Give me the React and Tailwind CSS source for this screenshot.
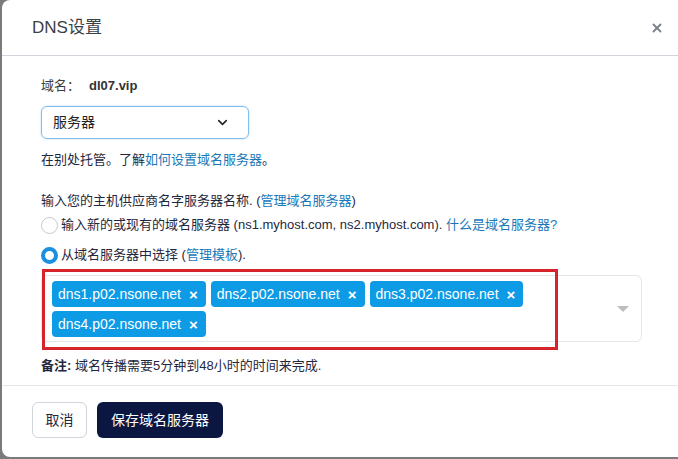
import React from "react";
import { X, ChevronDown } from "lucide-react";

const servers = [
  "dns1.p02.nsone.net",
  "dns2.p02.nsone.net",
  "dns3.p02.nsone.net",
  "dns4.p02.nsone.net",
];

function Tag({ label }) {
  return (
    <span className="inline-flex items-center h-[26px] pl-[6px] pr-[8px] rounded-[4px] bg-[#0d9be6] text-white text-[14px] leading-none">
      {label}
      <span className="ml-[8px] text-[15px] font-bold leading-none">×</span>
    </span>
  );
}

export default function App() {
  return (
    <div
      className="h-[459px] w-[678px] overflow-hidden bg-[#7b7b7b] pl-[2px] flex"
      style={{ fontFamily: '"Liberation Sans", "Noto Sans CJK SC", sans-serif' }}
    >
      <div className="w-[700px] h-[457px] shrink-0 bg-white rounded-lg flex flex-col">
        {/* Header */}
        <div className="h-[56px] pl-[30px] pr-[38px] flex items-center justify-between border-b border-gray-300 shrink-0">
          <h2 className="text-[17px] text-[#3b3f48]">DNS设置</h2>
          <X className="w-[14px] h-[14px] text-[#7d828b]" strokeWidth={3.2} />
        </div>

        {/* Body */}
        <div className="pl-[39px] pt-[20px] pb-[9px] text-[13px] text-[#1f2840] border-b border-gray-200">
          <div className="h-[20px] flex items-center">
            <span className="text-[#3d3d3d]">域名：</span>
            <span className="ml-[9px] font-bold text-[#333]">dl07.vip</span>
          </div>

          <div className="mt-[10px] w-[208px] h-[33px] border border-[#80bfe9] rounded-[6px] flex items-center justify-between pl-[11px] pr-[18px] shadow-[0_0_2px_rgba(96,170,230,0.5)]">
            <span className="text-[14px] text-[#222]">服务器</span>
            <ChevronDown className="w-[15px] h-[15px] text-[#222]" strokeWidth={2.5} />
          </div>

          <p className="mt-[11px] h-[20px] leading-[20px]">
            在别处托管。了解<span className="text-[#1a78b8]">如何设置域名服务器</span>。
          </p>

          <p className="mt-[21px] h-[20px] leading-[20px]">
            输入您的主机供应商名字服务器名称. (<span className="text-[#1a78b8]">管理域名服务器</span>)
          </p>

          <div className="mt-[4px] h-[20px] flex items-center">
            <span className="w-[17px] h-[17px] rounded-full border border-[#c4c7cc] bg-white shrink-0" />
            <span className="ml-[3px]">
              输入新的或现有的域名服务器 (ns1.myhost.com, ns2.myhost.com).{" "}
              <span className="text-[#1a78b8]">什么是域名服务器?</span>
            </span>
          </div>

          <div className="mt-[10px] h-[20px] flex items-center">
            <span className="w-[17px] h-[17px] rounded-full border-[4px] border-[#1b8fe0] bg-white shrink-0" />
            <span className="ml-[3px]">
              从域名服务器中选择 (<span className="text-[#1a78b8]">管理模板</span>).
            </span>
          </div>

          <div className="relative mt-[10px] w-[601px] h-[67px] border border-[#e3e5e8] rounded-[6px] pl-[10px] pt-[5px] pr-[40px]">
            <div className="flex flex-wrap gap-x-[5px] gap-y-[4px] w-[490px]">
              {servers.map((s) => (
                <Tag key={s} label={s} />
              ))}
            </div>
            <span className="absolute right-[12px] top-[30px] w-0 h-0 border-l-[6px] border-r-[6px] border-t-[6px] border-l-transparent border-r-transparent border-t-[#bdbdbd]" />
            <div className="absolute left-0 top-[-7px] w-[516px] h-[81px] border-[3px] border-[#d7242c] pointer-events-none" />
          </div>

          <p className="mt-[14px] h-[20px] leading-[20px]">
            <span className="font-bold">备注:</span> 域名传播需要5分钟到48小时的时间来完成.
          </p>
        </div>

        {/* Footer */}
        <div className="pl-[30px] pt-[16px] flex gap-[10px]">
          <button className="h-[36px] w-[55px] border border-gray-300 rounded-md text-[14px] text-[#1f2840] bg-white">
            取消
          </button>
          <button className="h-[36px] w-[126px] rounded-md text-[14px] text-white bg-[#0b1741]">
            保存域名服务器
          </button>
        </div>
      </div>
    </div>
  );
}
